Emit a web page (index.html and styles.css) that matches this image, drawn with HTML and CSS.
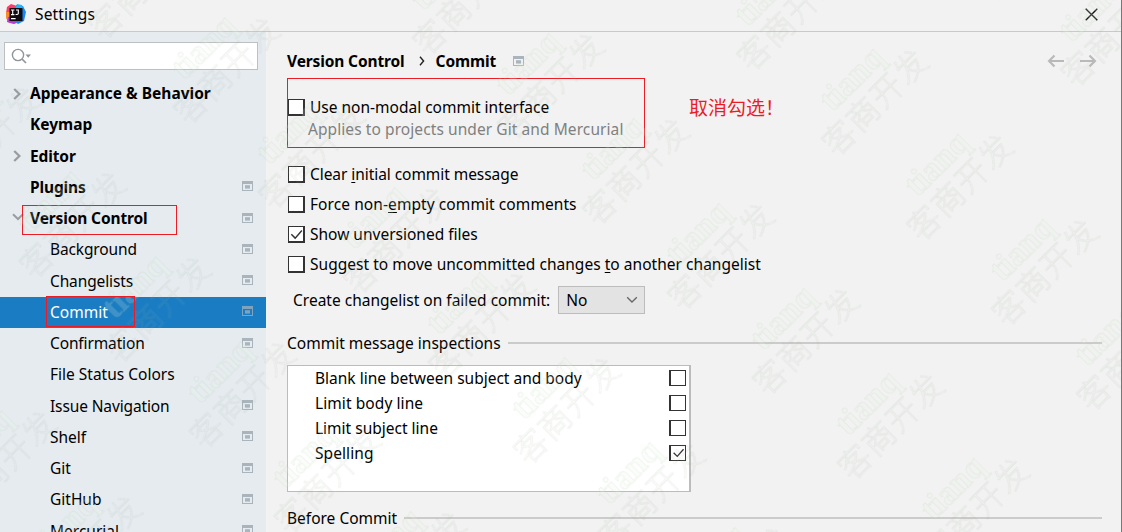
FILE: index.html
```html
<!DOCTYPE html>
<html lang="en">
<head>
<meta charset="utf-8">
<title>Settings</title>
<link rel="stylesheet" href="styles.css">
</head>
<body>
<svg class="defs" width="0" height="0">
  <symbol id="proj" viewBox="0 0 11 10"><path d="M0 0H11V10H0ZM1 3V9H10V3Z" fill-rule="evenodd"/><path d="M3 4.2H8V7.6H3Z"/></symbol>
  <symbol id="right" viewBox="0 0 8 12"><path d="M1.2 1 6.4 6 1.2 11" fill="none" stroke="#9a9da0" stroke-width="2.3"/></symbol>
  <symbol id="tick" viewBox="0 0 17 17"><path d="M2.6 8.2 7 12.6 14.6 4" fill="none" stroke="#333" stroke-width="1.6"/></symbol>
</svg>
<div class="window">
  <header class="titlebar">
    <svg class="logo" width="20" height="21" viewBox="0 0 20 21">
      <path d="M1 3 5 0 11 2 7 12 0 9Z" fill="#fb3e6c"/>
      <path d="M0 8 4 8 6 18 11 20 3 19 0 14Z" fill="#f98b27"/>
      <path d="M2 13 7 12 12 18 8 20 1 18Z" fill="#b83bd6"/>
      <path d="M10 1 17 2 20 8 18 17 12 20 8 17Z" fill="#1689f5"/>
      <path d="M11 0 16 1 17 5H9Z" fill="#29b5f4"/>
      <path d="M3.5 4H16.5V17H3.5Z" fill="#100b10"/>
      <path d="M5 6H8.4M6.7 6V10.6M5 10.6H8.4M10 6H12.3V9.4Q12.3 10.7 9.6 10.5M5 14.6H9.6" fill="none" stroke="#fff" stroke-width="1.1"/>
    </svg>
    <span class="title">Settings</span>
    <svg class="close" width="13" height="13" viewBox="0 0 13 13"><path d="M.7.7 12.3 12.3M12.3.7.7 12.3" stroke="#111" stroke-width="1.4"/></svg>
  </header>
  <div class="body">
    <aside class="sidebar">
      <div class="search">
        <svg width="22" height="18" viewBox="0 0 22 18"><circle cx="7" cy="7" r="5.6" fill="none" stroke="#8e969c" stroke-width="1.4"/><path d="M11 11 15 15" stroke="#8e969c" stroke-width="1.7"/><path d="M14.5 6.5H20L17.2 9.7Z" fill="#8e969c"/></svg>
      </div>
      <nav class="tree">
        <div class="row top"><svg class="arrow"><use href="#right"/></svg><span>Appearance &amp; Behavior</span></div>
        <div class="row top"><span>Keymap</span></div>
        <div class="row top"><svg class="arrow"><use href="#right"/></svg><span class="snug">Editor</span></div>
        <div class="row top"><span class="snug">Plugins</span><svg class="proj"><use href="#proj"/></svg></div>
        <div class="row top"><svg class="arrow down" viewBox="0 0 12 8"><path d="M1 1.2 6 6 11 1.2" fill="none" stroke="#9a9da0" stroke-width="2"/></svg><span class="snug">Version Control</span><svg class="proj"><use href="#proj"/></svg><i class="mark mark-vc"></i></div>
        <div class="row"><span class="snug">Background</span><svg class="proj"><use href="#proj"/></svg></div>
        <div class="row"><span class="snug">Changelists</span><svg class="proj"><use href="#proj"/></svg></div>
        <div class="row selected"><span>Commit</span><svg class="proj"><use href="#proj"/></svg><i class="mark mark-commit"></i></div>
        <div class="row"><span class="snug">Confirmation</span><svg class="proj"><use href="#proj"/></svg></div>
        <div class="row"><span>File Status Colors</span></div>
        <div class="row"><span class="snug">Issue Navigation</span><svg class="proj"><use href="#proj"/></svg></div>
        <div class="row"><span>Shelf</span><svg class="proj"><use href="#proj"/></svg></div>
        <div class="row"><span>Git</span><svg class="proj"><use href="#proj"/></svg></div>
        <div class="row"><span>GitHub</span><svg class="proj"><use href="#proj"/></svg></div>
        <div class="row"><span>Mercurial</span><svg class="proj"><use href="#proj"/></svg></div>
      </nav>
    </aside>
    <main class="content">
      <div class="crumbs">
        <span class="snug">Version Control</span>
        <svg class="sep" width="6" height="10" viewBox="0 0 6 10"><path d="M1 .8 4.6 5 1 9.2" fill="none" stroke="#222" stroke-width="1.4"/></svg>
        <span class="snug">Commit</span>
        <svg class="proj"><use href="#proj"/></svg>
        <svg class="nav" width="50" height="14" viewBox="0 0 50 14"><path d="M17 7H2M7.5 1.5 2 7 7.5 12.5M33 7H48M42.5 1.5 48 7 42.5 12.5" fill="none" stroke="#b9b9b9" stroke-width="2.1"/></svg>
      </div>
      <div class="group">
        <label class="check"><i class="box"></i><span>Use non-modal commit interface</span></label>
        <div class="hint"><span class="loose">Applies to projects under Git and Mercurial</span></div>
        <i class="mark mark-group"></i>
        <span class="note">取消勾选！</span>
      </div>
      <label class="check"><i class="box"></i><span class="snug-long">Clear <u>i</u>nitial commit message</span></label>
      <label class="check"><i class="box"></i><span class="loose">Force non-<u>e</u>mpty commit comments</span></label>
      <label class="check"><i class="box"><svg><use href="#tick"/></svg></i><span>Show unversioned files</span></label>
      <label class="check"><i class="box"></i><span class="loose-long">Suggest to move uncommitted changes <u>t</u>o another changelist</span></label>
      <div class="choose"><span>Create changelist on failed commit:</span>
        <div class="select"><span>No</span><svg width="12" height="8" viewBox="0 0 12 8"><path d="M1.2 1.2 6 6 10.8 1.2" fill="none" stroke="#666" stroke-width="1.3"/></svg></div>
      </div>
      <div class="section"><span>Commit message inspections</span><hr></div>
      <div class="list">
        <div class="item"><span>Blank line between subject and body</span><i class="box"></i></div>
        <div class="item"><span class="loose">Limit body line</span><i class="box"></i></div>
        <div class="item"><span>Limit subject line</span><i class="box"></i></div>
        <div class="item"><span class="loose">Spelling</span><i class="box"><svg><use href="#tick"/></svg></i></div>
      </div>
      <div class="section last"><span>Before Commit</span><hr></div>
    </main>
  </div>
  <svg class="watermark" width="1122" height="532">
    <defs>
      <pattern id="stamp" width="218" height="120.2" patternUnits="userSpaceOnUse" patternTransform="rotate(-45)">
        <text class="wm-latin" x="73" y="68">tianq</text>
        <text class="wm-cjk" x="44" y="101">客商开发</text>
      </pattern>
    </defs>
    <rect width="1122" height="532" fill="url(#stamp)"/>
  </svg>
</div>
</body>
</html>
```
FILE: styles.css
```css
* { box-sizing: border-box; }
body { margin: 0; font-family: "Noto Sans", "Open Sans", sans-serif; font-size: 15.5px; line-height: 20px; color: #000; }
.defs { position: absolute; }
.window { position: relative; width: 1122px; height: 532px; overflow: hidden; display: flex; flex-direction: column; background: #f2f2f2; border-right: 1px solid #777; }
span { white-space: nowrap; }
.snug { letter-spacing: -.13px; }
.snug-long { letter-spacing: -.06px; }
.loose { letter-spacing: .08px; }
.loose-long { letter-spacing: .03px; }

.titlebar { flex: none; height: 32px; display: flex; align-items: center; padding: 0 23px 3px 6px; border-bottom: 1px solid #c9c9c9; }
.title { margin-left: 9px; letter-spacing: .12px; }
.close { margin-left: auto; }

.body { flex: 1; min-height: 0; display: flex; }
.sidebar { flex: none; width: 266px; background: #e6ebf0; padding-top: 10px; overflow: hidden; }
.search { width: 254px; height: 28px; margin-left: 4px; border: 1px solid #bdc0c2; background: #fff; padding: 5px 6px; }
.search svg { display: block; }
.tree { margin-top: 8px; }
.row { position: relative; height: 31.25px; display: flex; align-items: center; padding: 0 13px 0 50px; }
.row span { margin-bottom: 1px; }
.row.top { padding-left: 30px; font-weight: 700; }
.row.selected { background: #1a7dc4; color: #fff; }
.row.selected span { margin-bottom: 0; }
.arrow { width: 8px; height: 12px; margin-left: -17px; margin-right: 9px; }
.arrow.down { width: 12px; height: 8px; margin: 0 6px 3px -18px; }
.proj { width: 11px; height: 10px; fill: #a9b4bd; }
.row .proj { margin-left: auto; margin-bottom: 2px; }
.row.selected .proj { fill: #7fa3bd; }
.mark { position: absolute; border: 1px solid #ed1c24; }
.mark-vc { left: 22px; top: 2px; width: 155px; height: 30px; }
.mark-commit { left: 46px; top: -1px; width: 89px; height: 31px; z-index: 1; }

.content { flex: 1; min-width: 0; padding-left: 21px; display: flex; flex-direction: column; }
.content > * { flex: none; }
.crumbs { height: 60px; display: flex; align-items: center; padding: 0 24px 2px 0; font-weight: 700; }
.crumbs span { margin-bottom: 1px; }
.sep { margin: 0 11px 0 14px; }
.crumbs .proj { margin-left: 17px; }
.nav { margin-left: auto; }
.group { position: relative; height: 67px; }
.check { height: 30px; display: flex; align-items: center; gap: 5px; padding-left: 1px; }
.box { flex: none; width: 17px; height: 17px; border: 1.5px solid #333; border-width: 1px 2px 2px 1px; background: #fff; }
.box svg { display: block; width: 15px; height: 15px; }
.hint { height: 15px; padding-left: 21px; color: #808080; line-height: 14px; }
.mark-group { left: 0; top: -14px; width: 358px; height: 70px; }
.note { position: absolute; left: 402px; top: 3px; color: #ed1c24; font: 19px/24px "Noto Sans CJK SC", sans-serif; }
.choose { height: 42px; display: flex; align-items: center; padding-left: 6px; }
.select { width: 87px; height: 28px; margin-left: 8px; padding: 0 6px 0 7px; border: 1px solid #bcbcbc; background: #e3e3e3; display: flex; align-items: center; justify-content: space-between; }
.section { height: 44px; display: flex; align-items: center; gap: 7px; padding-right: 19px; }
.section hr { flex: 1; height: 2px; margin: 0; border: 0; background: #cbcbcb; }
.section.last { height: 52px; }
.list { width: 404px; height: 127px; border: 1px solid #bcbcbc; border-right-width: 2px; background: #fff; }
.item { height: 25px; display: flex; align-items: center; justify-content: space-between; padding: 0 3px 2px 27px; }
.item .box { height: 16px; border-width: 1px 1px 1px 2px; }
.item .box svg { height: 14px; }
u { text-decoration-thickness: 1px; text-underline-offset: 2px; }

.watermark { position: absolute; left: 0; top: 0; pointer-events: none; }
.wm-cjk { font: 300 32px "Noto Sans CJK SC", sans-serif; letter-spacing: 1.5px; fill: none; stroke: rgba(150, 170, 140, .15); stroke-width: .8; }
.wm-latin { font: bold 34px "Liberation Serif", serif; fill: rgba(225, 245, 222, .18); stroke: rgba(150, 180, 140, .14); stroke-width: .8; }
```
